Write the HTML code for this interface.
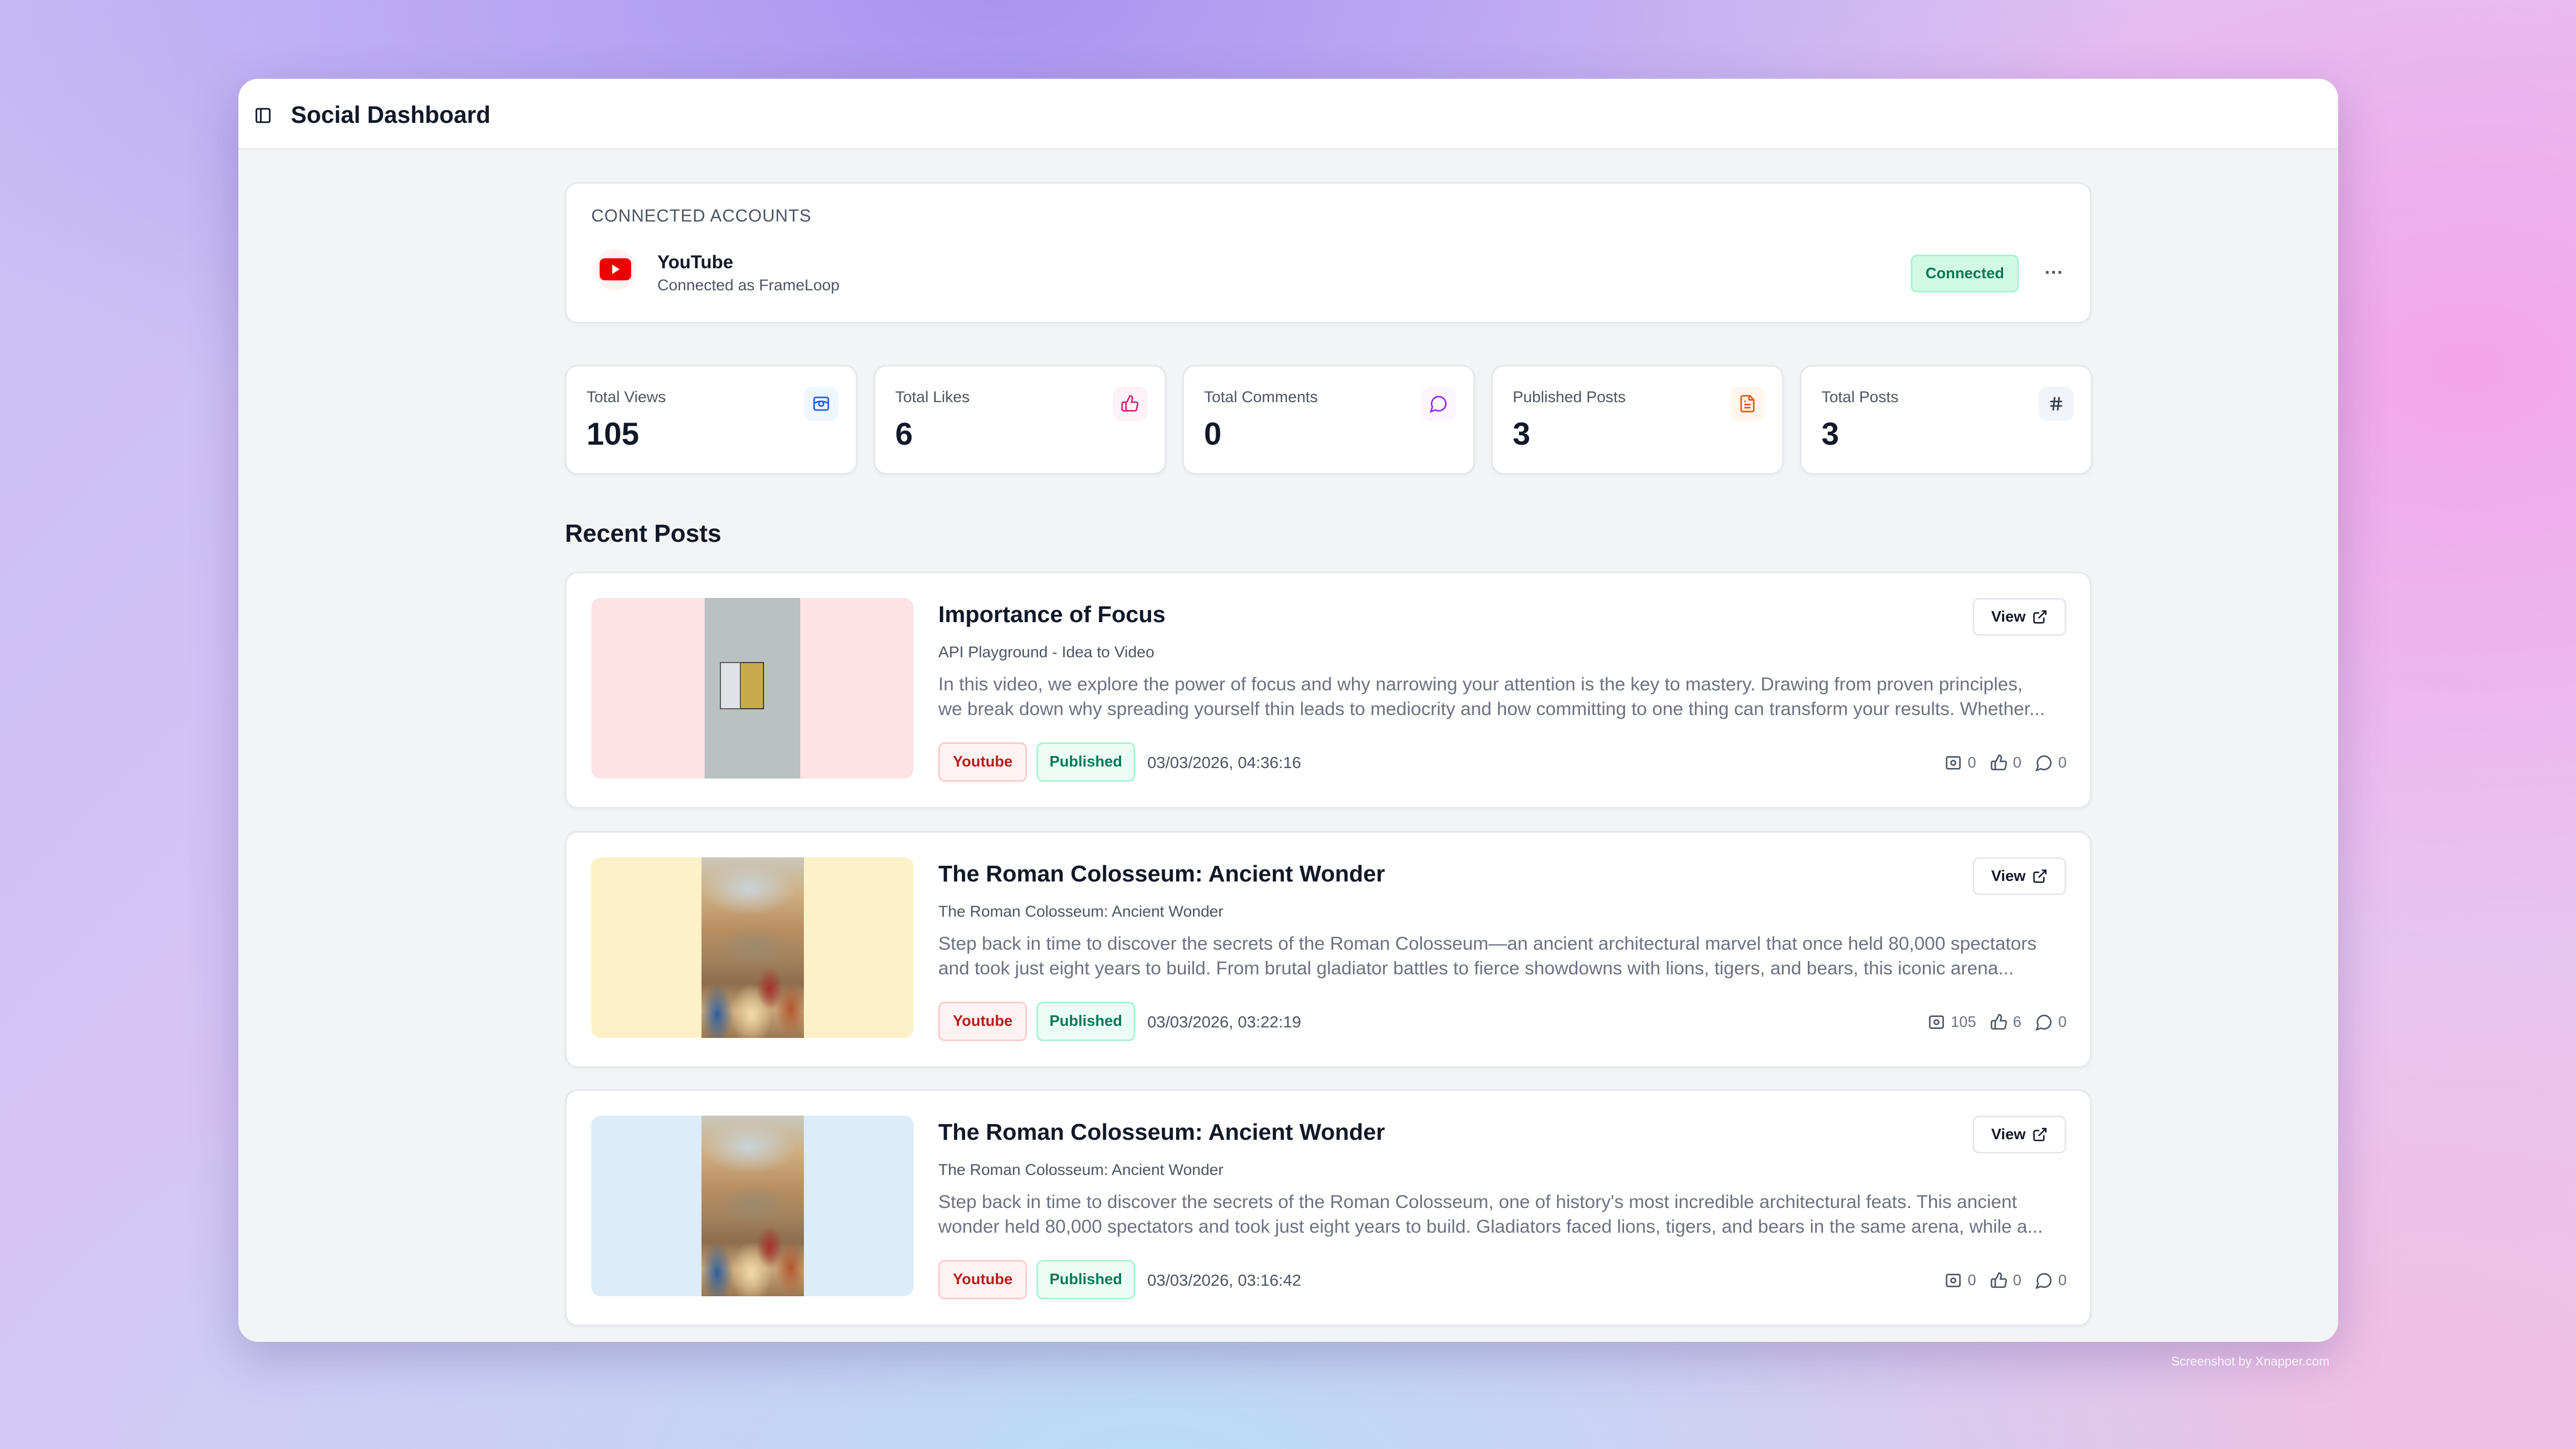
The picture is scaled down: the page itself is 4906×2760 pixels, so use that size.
<!DOCTYPE html>
<html><head><meta charset="utf-8"><style>
*{box-sizing:border-box;margin:0;padding:0}
html,body{width:4906px;height:2760px;overflow:hidden}
body{font-family:"Liberation Sans",sans-serif;position:relative;
background:
radial-gradient(ellipse 1600px 1100px at 4700px 700px,#f3a6ea 0%,rgba(243,166,234,0) 100%),
radial-gradient(ellipse 2200px 1000px at 1900px 0px,#a994f0 0%,rgba(169,148,240,0) 100%),
radial-gradient(ellipse 2400px 1000px at 2200px 2800px,#b9dcf6 0%,rgba(185,220,246,0) 100%),
radial-gradient(ellipse 1600px 900px at 4500px 2700px,#f1bfe6 0%,rgba(241,191,230,0) 100%),
linear-gradient(135deg,#c9bdf6 0%,#d7c7f4 40%,#e6c4f1 70%,#e9c6ee 100%);}
.win{position:absolute;left:454px;top:150px;width:3999px;height:2406px;background:#f3f4f6;border-radius:38px;overflow:hidden;box-shadow:0 30px 90px rgba(60,40,120,.25)}
.hdr{position:absolute;left:0;top:0;width:100%;height:135px;background:#fff;border-bottom:3px solid #e8e9ec}
.card{position:absolute;background:#fff;border:3px solid #e5e7eb;border-radius:24px;box-shadow:0 3px 8px rgba(0,0,0,.04)}
.abs{position:absolute}
.lbl{font-size:30px;color:#4b5563}
.val{font-size:60px;font-weight:bold;color:#111827}
.ib{position:absolute;width:66px;height:66px;border-radius:16px;display:flex;align-items:center;justify-content:center}
.badge{position:absolute;height:75px;border-radius:12px;font-size:29px;font-weight:bold;display:flex;align-items:center;justify-content:center}
.t{font-size:44px;font-weight:bold;color:#111827;white-space:nowrap}
.sub{font-size:30px;color:#4b5563;white-space:nowrap}
.desc{font-size:35.5px;color:#6b7280;line-height:47px;white-space:nowrap}
.date{font-size:31px;color:#4b5563}
.st{position:absolute;font-size:29px;color:#6b7280;display:flex;align-items:center;gap:10px}
.view{position:absolute;width:178px;height:72px;border:3px solid #e5e7eb;border-radius:12px;background:#fff;font-size:29px;font-weight:bold;color:#111827;display:flex;align-items:center;justify-content:center;gap:12px}
.thumb{position:absolute;left:47px;top:47px;width:614px;height:344px;border-radius:18px;overflow:hidden}
.col{position:absolute;top:0;width:195px;height:344px;
background:
radial-gradient(ellipse 90px 50px at 90px 60px,rgba(200,215,225,.9),rgba(200,215,225,0)),
radial-gradient(ellipse 70px 40px at 100px 170px,#9c8a6e,rgba(156,138,110,0)),
radial-gradient(ellipse 30px 60px at 30px 300px,#2f5f9a,rgba(47,95,154,0)),
radial-gradient(ellipse 30px 50px at 170px 290px,#b2552e,rgba(178,85,46,0)),
radial-gradient(ellipse 25px 40px at 130px 250px,#a8302a,rgba(168,48,42,0)),
radial-gradient(ellipse 40px 60px at 95px 300px,#f1dca6,rgba(241,220,166,0)),
linear-gradient(180deg,#c9c7bb 0%,#cfaf82 20%,#b98f62 40%,#a4835e 55%,#8e6d4d 70%,#c8a67a 85%,#9b7650 100%)}
</style></head><body>
<div class="win">
 <div class="hdr">
  <svg class="abs" style="left:30px;top:53px" width="34" height="34" viewBox="0 0 24 24" fill="none" stroke="#111827" stroke-width="2.2"><rect x="3" y="3" width="18" height="18" rx="2"/><line x1="9" y1="3" x2="9" y2="21"/></svg>
  <div class="abs" style="left:100px;top:43px;font-size:45px;font-weight:bold;color:#111827">Social Dashboard</div>
 </div>

 <div class="card" style="left:622px;top:197px;width:2907px;height:269px">
  <div class="abs" style="left:47px;top:42px;font-size:33px;color:#4b5563;letter-spacing:1px">CONNECTED ACCOUNTS</div>
  <div class="abs" style="left:53px;top:124px;width:80px;height:80px;border-radius:50%;background:#fef2f2"></div>
  <svg class="abs" style="left:63px;top:140px" width="60" height="46" viewBox="0 0 60 46"><rect x="0" y="2" width="60" height="42" rx="10" fill="#ef0000"/><path d="M24 14 L38 23 L24 32Z" fill="#fff"/></svg>
  <div class="abs" style="left:173px;top:130px;font-size:35px;font-weight:bold;color:#111827">YouTube</div>
  <div class="abs" style="left:173px;top:177px;font-size:30px;color:#4b5563">Connected as FrameLoop</div>
  <div class="badge" style="left:2560px;top:135px;width:206px;height:72px;background:#d1fae5;border:3px solid #a7f3d0;color:#047857">Connected</div>
  <div class="abs" style="left:2815px;top:148px;font-size:36px;color:#4b5563;font-weight:bold">···</div>
 </div>

 <!-- stats -->
 <div class="card" style="left:622px;top:545px;width:557px;height:209px">
  <div class="abs lbl" style="left:38px;top:42px">Total Views</div>
  <div class="abs val" style="left:38px;top:94px">105</div>
  <div class="ib" style="left:452px;top:38px;background:#eff6ff"><svg width="36" height="36" viewBox="0 0 24 24" fill="none" stroke="#2563eb" stroke-width="2"><rect x="3" y="4" width="18" height="16" rx="2"/><circle cx="12" cy="12" r="3"/><path d="M3 12c3-4 15-4 18 0"/></svg></div>
 </div>
 <div class="card" style="left:1210px;top:545px;width:557px;height:209px">
  <div class="abs lbl" style="left:38px;top:42px">Total Likes</div>
  <div class="abs val" style="left:38px;top:94px">6</div>
  <div class="ib" style="left:452px;top:38px;background:#fdf2f8"><svg width="36" height="36" viewBox="0 0 24 24" fill="none" stroke="#db2777" stroke-width="2"><path d="M7 10v11M15 5.9L14 10h5.8a2 2 0 0 1 2 2.3l-1.4 7a2 2 0 0 1-2 1.7H4a2 2 0 0 1-2-2v-7a2 2 0 0 1 2-2h2.8a2 2 0 0 0 1.8-1.1L12 2a3 3 0 0 1 3 3.9z"/></svg></div>
 </div>
 <div class="card" style="left:1798px;top:545px;width:557px;height:209px">
  <div class="abs lbl" style="left:38px;top:42px">Total Comments</div>
  <div class="abs val" style="left:38px;top:94px">0</div>
  <div class="ib" style="left:452px;top:38px;background:#faf5ff"><svg width="36" height="36" viewBox="0 0 24 24" fill="none" stroke="#9333ea" stroke-width="2"><path d="M7.9 20A9 9 0 1 0 4 16.1L2 22z"/></svg></div>
 </div>
 <div class="card" style="left:2386px;top:545px;width:557px;height:209px">
  <div class="abs lbl" style="left:38px;top:42px">Published Posts</div>
  <div class="abs val" style="left:38px;top:94px">3</div>
  <div class="ib" style="left:452px;top:38px;background:#fff7ed"><svg width="36" height="36" viewBox="0 0 24 24" fill="none" stroke="#ea580c" stroke-width="2"><path d="M15 2H6a2 2 0 0 0-2 2v16a2 2 0 0 0 2 2h12a2 2 0 0 0 2-2V7z"/><path d="M14 2v5h5M8 13h8M8 17h8M8 9h2"/></svg></div>
 </div>
 <div class="card" style="left:2974px;top:545px;width:557px;height:209px">
  <div class="abs lbl" style="left:38px;top:42px">Total Posts</div>
  <div class="abs val" style="left:38px;top:94px">3</div>
  <div class="ib" style="left:452px;top:38px;background:#f1f5f9"><svg width="34" height="34" viewBox="0 0 24 24" fill="none" stroke="#334155" stroke-width="2.2"><path d="M4 9h16M4 15h16M10 3L8 21M16 3l-2 18"/></svg></div>
 </div>

 <div class="abs" style="left:622px;top:838px;font-size:47px;font-weight:bold;color:#111827">Recent Posts</div>

 <!-- post 1 -->
 <div class="card" style="left:622px;top:939px;width:2907px;height:451px">
  <div class="thumb" style="background:#fee2e5">
   <div class="abs" style="left:216px;top:0;width:182px;height:344px;background:#b9c1c1"></div>
   <div class="abs" style="left:245px;top:122px;width:40px;height:90px;background:#dfe3e8;border:2px solid #555"></div>
   <div class="abs" style="left:285px;top:122px;width:44px;height:90px;background:#c9ab4d;border:2px solid #333;border-left:none"></div>
  </div>
  <div class="abs t" style="left:708px;top:54px">Importance of Focus</div>
  <div class="abs sub" style="left:708px;top:134px">API Playground - Idea to Video</div>
  <div class="abs desc" style="left:708px;top:188px">In this video, we explore the power of focus and why narrowing your attention is the key to mastery. Drawing from proven principles,<br>we break down why spreading yourself thin leads to mediocrity and how committing to one thing can transform your results. Whether...</div>
  <div class="badge" style="left:708px;top:322px;width:169px;background:#fef2f2;border:3px solid #fecaca;color:#b91c1c">Youtube</div>
  <div class="badge" style="left:895px;top:322px;width:188px;background:#ecfdf5;border:3px solid #a7f3d0;color:#047857">Published</div>
  <div class="abs date" style="left:1106px;top:343px">03/03/2026, 04:36:16</div>
  <div class="view" style="left:2678px;top:47px">View <svg width="30" height="30" viewBox="0 0 24 24" fill="none" stroke="#111827" stroke-width="2.2"><path d="M15 3h6v6M10 14L21 3M18 13v6a2 2 0 0 1-2 2H5a2 2 0 0 1-2-2V8a2 2 0 0 1 2-2h6"/></svg></div>
  <div class="st" style="right:44px;top:344px">
   <svg width="34" height="34" viewBox="0 0 24 24" fill="none" stroke="#4b5563" stroke-width="2"><rect x="3" y="4" width="18" height="16" rx="2"/><circle cx="12" cy="12" r="3"/></svg>0&nbsp;&nbsp;
   <svg width="34" height="34" viewBox="0 0 24 24" fill="none" stroke="#4b5563" stroke-width="2"><path d="M7 10v11M15 5.9L14 10h5.8a2 2 0 0 1 2 2.3l-1.4 7a2 2 0 0 1-2 1.7H4a2 2 0 0 1-2-2v-7a2 2 0 0 1 2-2h2.8a2 2 0 0 0 1.8-1.1L12 2a3 3 0 0 1 3 3.9z"/></svg>0&nbsp;&nbsp;
   <svg width="34" height="34" viewBox="0 0 24 24" fill="none" stroke="#4b5563" stroke-width="2"><path d="M7.9 20A9 9 0 1 0 4 16.1L2 22z"/></svg>0
  </div>
 </div>

 <!-- post 2 -->
 <div class="card" style="left:622px;top:1433px;width:2907px;height:451px">
  <div class="thumb" style="background:#fef1c8"><div class="col" style="left:210px"></div></div>
  <div class="abs t" style="left:708px;top:54px">The Roman Colosseum: Ancient Wonder</div>
  <div class="abs sub" style="left:708px;top:134px">The Roman Colosseum: Ancient Wonder</div>
  <div class="abs desc" style="left:708px;top:188px">Step back in time to discover the secrets of the Roman Colosseum—an ancient architectural marvel that once held 80,000 spectators<br>and took just eight years to build. From brutal gladiator battles to fierce showdowns with lions, tigers, and bears, this iconic arena...</div>
  <div class="badge" style="left:708px;top:322px;width:169px;background:#fef2f2;border:3px solid #fecaca;color:#b91c1c">Youtube</div>
  <div class="badge" style="left:895px;top:322px;width:188px;background:#ecfdf5;border:3px solid #a7f3d0;color:#047857">Published</div>
  <div class="abs date" style="left:1106px;top:343px">03/03/2026, 03:22:19</div>
  <div class="view" style="left:2678px;top:47px">View <svg width="30" height="30" viewBox="0 0 24 24" fill="none" stroke="#111827" stroke-width="2.2"><path d="M15 3h6v6M10 14L21 3M18 13v6a2 2 0 0 1-2 2H5a2 2 0 0 1-2-2V8a2 2 0 0 1 2-2h6"/></svg></div>
  <div class="st" style="right:44px;top:344px">
   <svg width="34" height="34" viewBox="0 0 24 24" fill="none" stroke="#4b5563" stroke-width="2"><rect x="3" y="4" width="18" height="16" rx="2"/><circle cx="12" cy="12" r="3"/></svg>105&nbsp;&nbsp;
   <svg width="34" height="34" viewBox="0 0 24 24" fill="none" stroke="#4b5563" stroke-width="2"><path d="M7 10v11M15 5.9L14 10h5.8a2 2 0 0 1 2 2.3l-1.4 7a2 2 0 0 1-2 1.7H4a2 2 0 0 1-2-2v-7a2 2 0 0 1 2-2h2.8a2 2 0 0 0 1.8-1.1L12 2a3 3 0 0 1 3 3.9z"/></svg>6&nbsp;&nbsp;
   <svg width="34" height="34" viewBox="0 0 24 24" fill="none" stroke="#4b5563" stroke-width="2"><path d="M7.9 20A9 9 0 1 0 4 16.1L2 22z"/></svg>0
  </div>
 </div>

 <!-- post 3 -->
 <div class="card" style="left:622px;top:1925px;width:2907px;height:451px">
  <div class="thumb" style="background:#dcecfb"><div class="col" style="left:210px"></div></div>
  <div class="abs t" style="left:708px;top:54px">The Roman Colosseum: Ancient Wonder</div>
  <div class="abs sub" style="left:708px;top:134px">The Roman Colosseum: Ancient Wonder</div>
  <div class="abs desc" style="left:708px;top:188px">Step back in time to discover the secrets of the Roman Colosseum, one of history's most incredible architectural feats. This ancient<br>wonder held 80,000 spectators and took just eight years to build. Gladiators faced lions, tigers, and bears in the same arena, while a...</div>
  <div class="badge" style="left:708px;top:322px;width:169px;background:#fef2f2;border:3px solid #fecaca;color:#b91c1c">Youtube</div>
  <div class="badge" style="left:895px;top:322px;width:188px;background:#ecfdf5;border:3px solid #a7f3d0;color:#047857">Published</div>
  <div class="abs date" style="left:1106px;top:343px">03/03/2026, 03:16:42</div>
  <div class="view" style="left:2678px;top:47px">View <svg width="30" height="30" viewBox="0 0 24 24" fill="none" stroke="#111827" stroke-width="2.2"><path d="M15 3h6v6M10 14L21 3M18 13v6a2 2 0 0 1-2 2H5a2 2 0 0 1-2-2V8a2 2 0 0 1 2-2h6"/></svg></div>
  <div class="st" style="right:44px;top:344px">
   <svg width="34" height="34" viewBox="0 0 24 24" fill="none" stroke="#4b5563" stroke-width="2"><rect x="3" y="4" width="18" height="16" rx="2"/><circle cx="12" cy="12" r="3"/></svg>0&nbsp;&nbsp;
   <svg width="34" height="34" viewBox="0 0 24 24" fill="none" stroke="#4b5563" stroke-width="2"><path d="M7 10v11M15 5.9L14 10h5.8a2 2 0 0 1 2 2.3l-1.4 7a2 2 0 0 1-2 1.7H4a2 2 0 0 1-2-2v-7a2 2 0 0 1 2-2h2.8a2 2 0 0 0 1.8-1.1L12 2a3 3 0 0 1 3 3.9z"/></svg>0&nbsp;&nbsp;
   <svg width="34" height="34" viewBox="0 0 24 24" fill="none" stroke="#4b5563" stroke-width="2"><path d="M7.9 20A9 9 0 1 0 4 16.1L2 22z"/></svg>0
  </div>
 </div>
</div>
<div class="abs" style="left:4135px;top:2580px;font-size:24px;color:#fff;opacity:.85">Screenshot by Xnapper.com</div>
</body></html>
